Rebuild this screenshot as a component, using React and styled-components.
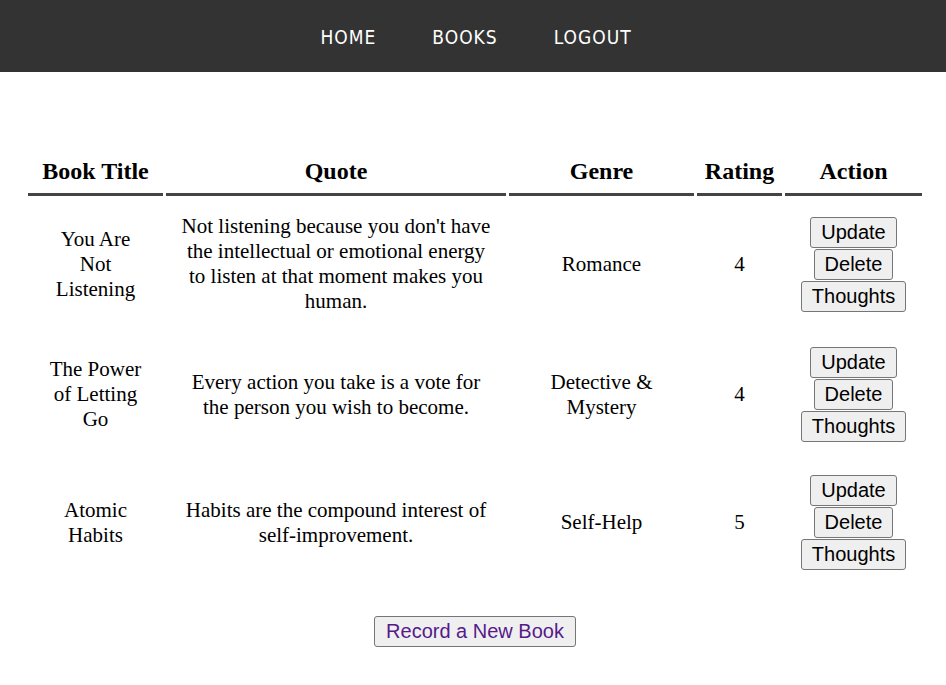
import React from 'react';
import styled, { createGlobalStyle } from 'styled-components';

const GlobalStyle = createGlobalStyle`
  body {
    margin: 0;
    font-family: 'Liberation Serif', 'Times New Roman', serif;
    background: #fff;
  }
`;

const books = [
  {
    title: 'You Are Not Listening',
    quote:
      "Not listening because you don't have the intellectual or emotional energy to listen at that moment makes you human.",
    genre: 'Romance',
    rating: 4,
  },
  {
    title: 'The Power of Letting Go',
    quote: 'Every action you take is a vote for the person you wish to become.',
    genre: 'Detective & Mystery',
    rating: 4,
  },
  {
    title: 'Atomic Habits',
    quote: 'Habits are the compound interest of self-improvement.',
    genre: 'Self-Help',
    rating: 5,
  },
];

export default function App() {
  return (
    <>
      <GlobalStyle />
      <Nav>
        <NavLink href='#'>Home</NavLink>
        <NavLink href='#'>Books</NavLink>
        <NavLink href='#'>Logout</NavLink>
      </Nav>
      <Table>
        <colgroup>
          <col style={{ width: '135px' }} />
          <col style={{ width: '340px' }} />
          <col style={{ width: '185px' }} />
          <col style={{ width: '85px' }} />
          <col style={{ width: '137px' }} />
        </colgroup>
        <thead>
          <tr>
            <Th>Book Title</Th>
            <Th>Quote</Th>
            <Th>Genre</Th>
            <Th>Rating</Th>
            <Th>Action</Th>
          </tr>
        </thead>
        <tbody>
          {books.map((b) => (
            <tr key={b.title}>
              <Td>{b.title}</Td>
              <Td>{b.quote}</Td>
              <Td>{b.genre}</Td>
              <Td>{b.rating}</Td>
              <Td>
                <ActionButton>Update</ActionButton>
                <ActionButton>Delete</ActionButton>
                <ActionButton>Thoughts</ActionButton>
              </Td>
            </tr>
          ))}
        </tbody>
      </Table>
      <Footer>
        <RecordButton>
          <RecordLink href='#'>Record a New Book</RecordLink>
        </RecordButton>
      </Footer>
    </>
  );
}

const Nav = styled.nav`
  height: 72px;
  background: #333;
  display: flex;
  justify-content: center;
  align-items: center;
  gap: 56px;
  padding-left: 6px;
`;
const NavLink = styled.a`
  color: #fff;
  text-decoration: none;
  text-transform: uppercase;
  font-family: 'DejaVu Sans Condensed', 'DejaVu Sans', sans-serif;
  font-size: 19px;
  letter-spacing: 1px;
  padding-top: 2px;
`;
const Table = styled.table`
  table-layout: fixed;
  width: 900px;
  margin: 72px 0 0 25px;
  border-spacing: 3px;
`;
const Th = styled.th`
  font-size: 24px;
  font-weight: 700;
  line-height: 27px;
  padding: 11px 2px 8px;
  border-bottom: 3px solid #444;
  text-align: center;
`;
const Td = styled.td`
  font-size: 21px;
  line-height: 25px;
  padding: 15px;
  text-align: center;
  vertical-align: middle;
`;
const ActionButton = styled.button`
  display: block;
  margin: 0 auto 1px;
  font-family: 'Liberation Sans', Arial, sans-serif;
  font-size: 20px;
  line-height: 23px;
  padding: 3px 10px;
  background: #efefef;
  color: #000;
  border: 1px solid #767676;
  border-radius: 3px;
  &:last-child {
    margin-bottom: 0;
  }
`;
const Footer = styled.div`
  display: flex;
  justify-content: center;
  margin-top: 28px;
  padding-left: 4px;
`;
const RecordButton = styled.button`
  font-family: 'Liberation Sans', Arial, sans-serif;
  font-size: 20px;
  line-height: 23px;
  padding: 3px 11px;
  background: #efefef;
  border: 1px solid #767676;
  border-radius: 3px;
`;
const RecordLink = styled.a`
  color: #551a8b;
  text-decoration: none;
`;
